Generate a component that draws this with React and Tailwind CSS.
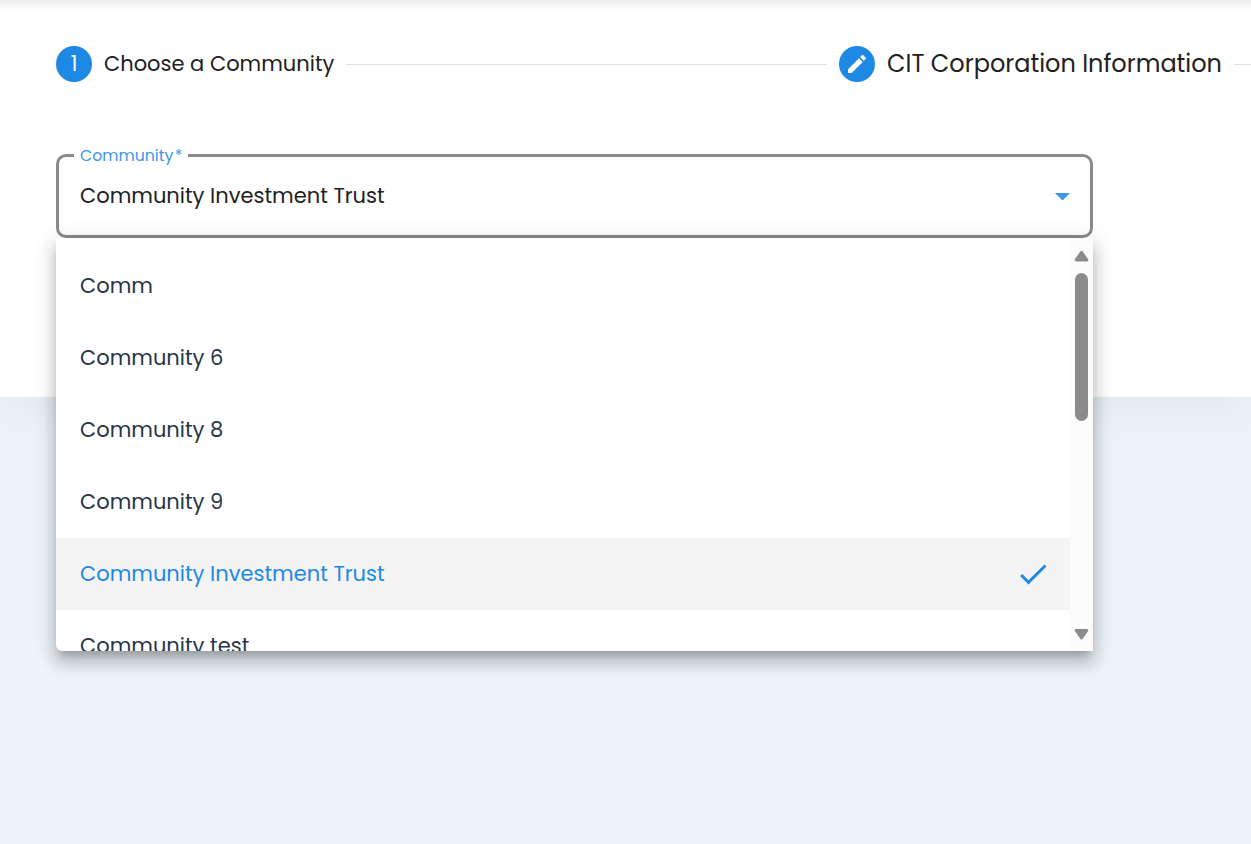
const options = [
  { label: 'Comm' },
  { label: 'Community 6' },
  { label: 'Community 8' },
  { label: 'Community 9' },
  { label: 'Community Investment Trust', selected: true },
  { label: 'Community test' },
];

function StepBadge({ children }) {
  return (
    <span className="flex size-9 shrink-0 items-center justify-center rounded-full bg-[#1e88e5] text-[21px] text-white">
      {children}
    </span>
  );
}

function Stepper() {
  return (
    <div className="flex h-9 items-center overflow-hidden pl-14 whitespace-nowrap text-[#212121]">
      <StepBadge>1</StepBadge>
      <span className="ml-3 w-[230px] shrink-0 text-[21px]">Choose a Community</span>
      <span className="ml-3 mt-px h-px w-[481px] shrink-0 bg-[#e0e0e0]" />
      <span className="ml-3 flex">
        <StepBadge>
          <svg viewBox="0 0 24 24" className="size-6" fill="currentColor">
            <path d="M3 17.25V21h3.75L17.81 9.94l-3.75-3.75L3 17.25zM20.71 7.04c.39-.39.39-1.02 0-1.41l-2.34-2.34c-.39-.39-1.02-.39-1.41 0l-1.83 1.83 3.75 3.75 1.83-1.83z" />
          </svg>
        </StepBadge>
      </span>
      <span className="ml-3 w-[335px] shrink-0 text-[24px]">CIT Corporation Information</span>
      <span className="ml-3 mt-px h-px grow bg-[#e0e0e0]" />
    </div>
  );
}

function ScrollBar() {
  return (
    <div className="flex w-[23px] shrink-0 flex-col items-center bg-[#fcfcfc] pt-3 pb-[11px] text-[#8b8b8b]">
      <svg viewBox="0 0 15 12" className="h-3 w-[15px] shrink-0" fill="currentColor" stroke="currentColor" strokeWidth="3" strokeLinejoin="round">
        <path d="M7.5 2.4 2.2 9.9H12.8Z" />
      </svg>
      <div className="mt-[11px] h-[148px] w-[13px] rounded-full bg-[#8b8b8b]" />
      <svg viewBox="0 0 15 12" className="mt-auto h-3 w-[15px] shrink-0" fill="currentColor" stroke="currentColor" strokeWidth="3" strokeLinejoin="round">
        <path d="M7.5 9.9 2.2 2.4H12.8Z" />
      </svg>
    </div>
  );
}

function Menu() {
  return (
    <div className="absolute top-full left-0 flex h-[413px] w-full overflow-hidden rounded-bl-md bg-white shadow-[0_7.5px_7.5px_-4.5px_rgba(0,0,0,0.2),0_12px_15px_1.5px_rgba(0,0,0,0.14),0_4.5px_21px_3px_rgba(0,0,0,0.12)]">
      <ul className="grow pt-3">
        {options.map((option) => (
          <li
            key={option.label}
            className={
              'flex h-[72px] items-center justify-between pr-[19px] pl-6 text-[21px]' +
              (option.selected ? ' bg-[#f4f4f4] text-[#1e88e5]' : ' text-[#2a3547]')
            }
          >
            <span>{option.label}</span>
            {option.selected && (
              <svg viewBox="0 0 24 24" className="size-9" fill="currentColor">
                <path d="M9 16.17 4.83 12l-1.42 1.41L9 19 21 7l-1.41-1.41z" />
              </svg>
            )}
          </li>
        ))}
      </ul>
      <ScrollBar />
    </div>
  );
}

function CommunityField() {
  return (
    <div className="relative mt-[72px] ml-14 h-[84px] w-[1037px]">
      <div className="flex h-full items-center justify-between rounded-[10px] border-3 border-[#8b8b8b] pr-5 pl-[21px]">
        <span className="text-[21px] text-[#212121]">Community Investment Trust</span>
        <svg viewBox="0 0 15 7.5" className="mt-px h-[7.5px] w-[15px]" fill="#3f97e9">
          <path d="M0 0h15L7.5 7.5z" />
        </svg>
      </div>
      <span className="absolute -top-[11px] left-[18px] w-[114px] bg-white px-1.5 text-[15.75px] leading-[26px] text-[#3f97e9]">
        Community<span className="ml-[1.5px]">*</span>
      </span>
      <Menu />
    </div>
  );
}

export default function App() {
  return (
    <div className="h-[844px] overflow-hidden bg-[#ecf4f8] font-['Poppins','Inter',sans-serif]">
      <main className="relative h-[397px] bg-white pt-[46px] shadow-[0_11px_45px_rgba(0,0,0,0.05)]">
        <div className="absolute inset-x-0 top-0 h-2.5 bg-linear-to-b from-[#ececec] to-white" />
        <Stepper />
        <CommunityField />
      </main>
    </div>
  );
}
